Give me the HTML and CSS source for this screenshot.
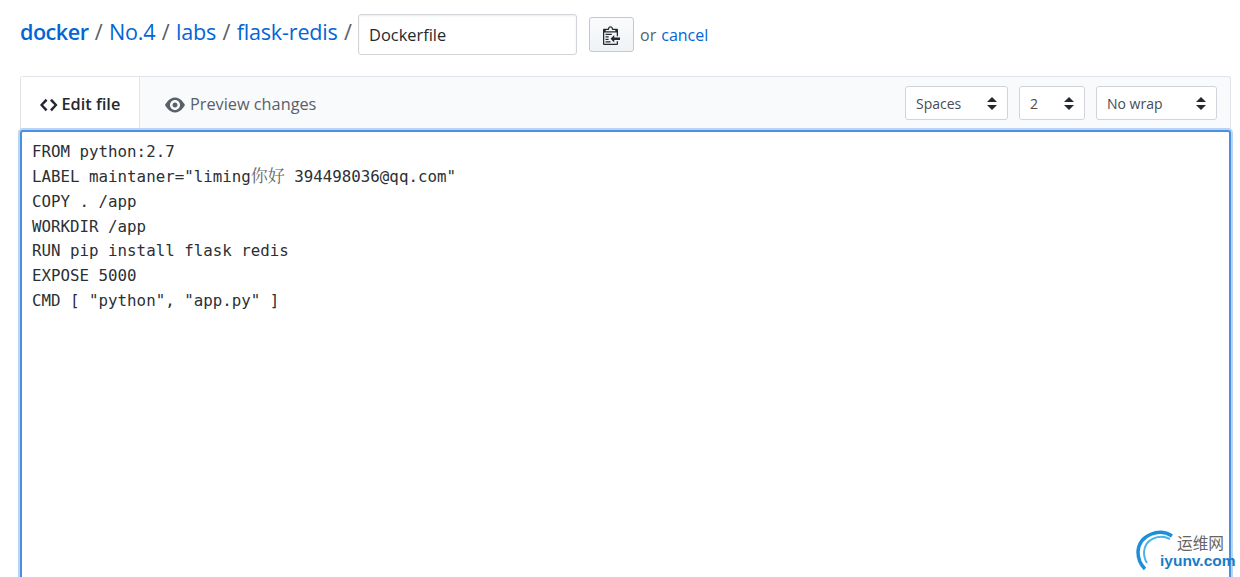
FILE: index.html
```html
<!DOCTYPE html>
<html lang="en">
<head>
<meta charset="utf-8">
<title>Dockerfile</title>
<link rel="stylesheet" href="styles.css">
</head>
<body>
<div class="page">
  <div class="breadcrumb">
    <a class="crumb root" href="#">docker</a><span class="sep">/</span>
    <a class="crumb" href="#">No.4</a><span class="sep">/</span>
    <a class="crumb" href="#">labs</a><span class="sep">/</span>
    <a class="crumb" href="#">flask-redis</a><span class="sep last">/</span>
    <div class="name-input">Dockerfile</div>
    <button class="clip-btn" type="button" aria-label="Paste">
      <svg width="17.500" height="20" viewBox="0 0 14 16"><path fill="#24292e" d="M2 13h4v1H2v-1zm5-6H2v1h5V7zm2 3V8l-3 3 3 3v-2h5v-2H9zM4.500 9H2v1h2.500V9zM2 12h2.500v-1H2v1zm9 1h1v2c-.02.28-.11.52-.3.7-.19.18-.42.28-.7.3H1c-.55 0-1-.45-1-1V4c0-.55.45-1 1-1h3c0-1.110.89-2 2-2 1.110 0 2 .89 2 2h3c.55 0 1 .45 1 1v5h-1V6H1v9h10v-2zM2 5h8c0-.55-.45-1-1-1H8c-.55 0-1-.45-1-1s-.45-1-1-1-1 .45-1 1-.45 1-1 1H3c-.55 0-1 .45-1 1z"/></svg>
    </button>
    <span class="or">or</span><a class="cancel" href="#">cancel</a>
  </div>

  <div class="editor">
    <div class="toolbar">
      <div class="tab active">
        <svg class="tab-icon" width="17.500" height="20" viewBox="0 0 14 16"><path fill="#24292e" d="M9.500 3L8 4.500 11.500 8 8 11.500 9.500 13 14 8 9.500 3zm-5 0L0 8l4.500 5L6 11.500 2.500 8 6 4.500 4.500 3z"/></svg>
        <span>Edit file</span>
      </div>
      <div class="tab preview">
        <svg class="tab-icon" width="20" height="20" viewBox="0 0 16 16"><path fill="#586069" d="M8.060 2C3 2 0 8 0 8s3 6 8.060 6C13 14 16 8 16 8s-3-6-7.940-6zM8 12c-2.200 0-4-1.780-4-4 0-2.200 1.800-4 4-4 2.220 0 4 1.800 4 4 0 2.220-1.780 4-4 4zm2-4c0 1.110-.89 2-2 2-1.110 0-2-.89-2-2 0-1.110.89-2 2-2 1.110 0 2 .89 2 2z"/></svg>
        <span>Preview changes</span>
      </div>
      <div class="options">
        <div class="select sel-indent"><span>Spaces</span><i class="updown"></i></div>
        <div class="select sel-size"><span>2</span><i class="updown"></i></div>
        <div class="select sel-wrap"><span>No wrap</span><i class="updown"></i></div>
      </div>
    </div>
    <div class="code">
      <div class="line">FROM python:2.7</div>
      <div class="line">LABEL maintaner="liming<span class="cjk">你好</span> 394498036@qq.com"</div>
      <div class="line">COPY . /app</div>
      <div class="line">WORKDIR /app</div>
      <div class="line">RUN pip install flask redis</div>
      <div class="line">EXPOSE 5000</div>
      <div class="line">CMD [ "python", "app.py" ]</div>
    </div>
  </div>
</div>
<div class="watermark">
  <svg class="wm-arc" width="40" height="42" viewBox="0 0 40 42">
    <path d="M36 6C24-2 3 4 2 22c0 8 3 13 7 17" fill="none" stroke="#1c8fd8" stroke-width="3.500"/>
    <path d="M34 9C24 4 9 8 8 22c0 5 1 8 3 11" fill="none" stroke="#4db2e8" stroke-width="2"/>
  </svg>
  <span class="wm-cn">运维网</span>
  <span class="wm-en">iyunv.com</span>
</div>
</body>
</html>
```
FILE: styles.css
```css
* { box-sizing: border-box; }
html, body { margin: 0; height: 577px; overflow: hidden; background: #fff; }
body { font-family: "Open Sans", "Noto Sans", sans-serif; color: #24292e; position: relative; }
.page { padding: 14px 9px 0 20px; }
.breadcrumb { display: flex; align-items: center; height: 41px; font-size: 21.600px; }
.crumb { color: #0366d6; text-decoration: none; letter-spacing: -0.2px; position: relative; top: -3px; }
.crumb.root { font-weight: 600; letter-spacing: -0.5px; }
.sep { color: #586069; margin: 0 6.300px; position: relative; top: -3px; }
.sep.last { margin-right: 6.200px; }
.name-input { width: 219px; height: 41px; border: 1px solid #d1d5da; border-radius: 3px; padding: 0 10px; font-size: 16.400px; line-height: 40px; color: #24292e; box-shadow: inset 0 1px 2px rgba(27,31,35,.075); }
.clip-btn { width: 45px; height: 35px; margin-left: 12px; border: 1px solid #c4c8cc; border-radius: 3px; background: linear-gradient(#fafbfc, #eff3f6); display: flex; align-items: center; justify-content: center; padding: 0; }
.or { font-size: 16px; color: #586069; margin-left: 6px; }
.cancel { font-size: 16px; color: #0366d6; text-decoration: none; margin-left: 5px; }
.editor { margin-top: 21px; border: 1px solid #e1e4e8; border-bottom: 0; border-radius: 3px 3px 0 0; height: 520px; background: #f9fafb; }
.toolbar { display: flex; align-items: stretch; height: 53px; }
.tab { display: flex; align-items: center; font-size: 16.300px; gap: 5px; padding-top: 2px; }
.tab span { line-height: 1; }
.tab.active { width: 119px; background: #fff; border-right: 1px solid #e1e4e8; padding-left: 19px; gap: 4px; font-weight: 600; color: #24292e; }
.tab.preview { padding-left: 25px; color: #586069; }
.options { margin-left: auto; display: flex; gap: 11px; padding: 9px 13px 0 0; align-items: flex-start; }
.select { height: 34px; border: 1px solid #d1d5da; border-radius: 3px; background: #fff; display: flex; align-items: center; justify-content: space-between; padding: 0 10px; font-size: 14px; color: #444d56; }
.sel-indent { width: 103px; }
.sel-size { width: 66px; }
.sel-wrap { width: 121px; }
.updown { width: 10px; height: 13px; position: relative; }
.updown::before, .updown::after { content: ""; position: absolute; left: 0; border-left: 5px solid transparent; border-right: 5px solid transparent; }
.updown::before { top: 0; border-bottom: 5px solid #24292e; }
.updown::after { bottom: 0; border-top: 5px solid #24292e; }
.code { position: relative; margin: 0 0 0 -1px; width: 1211px; height: 470px; background: #fff; border: 2px solid #4a90e2; border-radius: 3px; box-shadow: 0 0 0 2px #b9d5f5; padding: 8.300px 10px; font-family: "DejaVu Sans Mono", "Liberation Mono", monospace; font-size: 15.800px; color: #2b3035; line-height: 24.800px; }
.line { white-space: pre; height: 24.800px; }
.cjk { font-family: "Noto Serif CJK SC", "Noto Sans CJK SC", serif; color: #666; font-size: 17px; line-height: 0; }
.watermark { position: absolute; left: 1136px; top: 530px; width: 104px; height: 44px; }
.wm-arc { position: absolute; left: 0; top: 0; }
.wm-cn { position: absolute; left: 41px; top: 4px; font-family: "Noto Sans CJK SC", sans-serif; font-size: 15.700px; line-height: 17px; color: #666; }
.wm-en { position: absolute; left: 24px; top: 23px; font-family: "Liberation Sans", sans-serif; font-weight: 700; font-size: 15.500px; line-height: 16px; color: #1a7cc8; }
```
